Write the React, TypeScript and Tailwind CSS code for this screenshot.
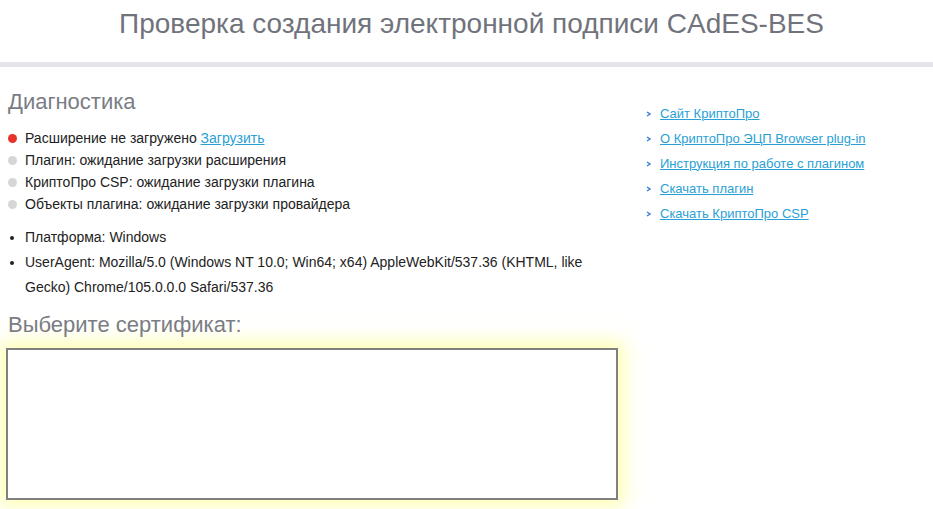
import React from "react";

const statuses = [
  { color: "bg-[#e8322c]", text: "Расширение не загружено", link: "Загрузить" },
  { color: "bg-[#d6d6d6]", text: "Плагин: ожидание загрузки расширения" },
  { color: "bg-[#d6d6d6]", text: "КриптоПро CSP: ожидание загрузки плагина" },
  { color: "bg-[#d6d6d6]", text: "Объекты плагина: ожидание загрузки провайдера" },
];

const links = [
  "Сайт КриптоПро",
  "О КриптоПро ЭЦП Browser plug-in",
  "Инструкция по работе с плагином",
  "Скачать плагин",
  "Скачать КриптоПро CSP",
];

export default function App() {
  return (
    <div className="min-h-[509px] bg-white font-['Liberation_Sans',Arial,sans-serif] text-[#222]">
      <header className="h-[62px] pt-[6px] pl-[10px] text-center">
        <h1 className="text-[28px] leading-[36px] text-[#71737c]">
          Проверка создания электронной подписи CAdES-BES
        </h1>
      </header>
      <div className="h-[5px] bg-[#e4e5ea]" />
      <div className="flex">
        <div className="w-[640px] pl-2">
          <h2 className="mt-[21px] text-[22px] leading-[28px] text-[#7a7c84]">Диагностика</h2>
          <ul className="mt-[11px]">
            {statuses.map((s, i) => (
              <li key={i} className="flex h-[22px] items-center text-[14px]">
                <span className={`mr-[8px] h-[9px] w-[9px] rounded-full ${s.color}`} />
                <span>
                  {s.text}
                  {s.link && (
                    <>
                      {" "}
                      <a href="#" className="text-[#2a9fd6] underline">
                        {s.link}
                      </a>
                    </>
                  )}
                </span>
              </li>
            ))}
          </ul>
          <ul className="mt-[10px] w-[590px] list-disc pl-[17px] text-[14px] leading-[25px]">
            <li>Платформа: Windows</li>
            <li>
              UserAgent: Mozilla/5.0 (Windows NT 10.0; Win64; x64) AppleWebKit/537.36 (KHTML, like Gecko)
              Chrome/105.0.0.0 Safari/537.36
            </li>
          </ul>
          <h2 className="mt-[11px] text-[22px] leading-[28px] text-[#7a7c84]">Выберите сертификат:</h2>
          <div className="-ml-[2px] mt-[9px] h-[152px] w-[612px] border-2 border-[#808080] bg-white shadow-[0_0_18px_6px_rgba(255,255,150,0.75)]" />
        </div>
        <div className="pt-[34px] pl-[6px]">
          <ul>
            {links.map((l) => (
              <li key={l} className="flex h-[25px] items-center text-[13px]">
                <svg width="5" height="6" viewBox="0 0 5 6" className="mr-[9px]">
                  <path d="M1 1 L4 3 L1 5" fill="none" stroke="#3a7fd6" strokeWidth="1.4" />
                </svg>
                <a href="#" className="text-[#2a9fd6] underline">
                  {l}
                </a>
              </li>
            ))}
          </ul>
        </div>
      </div>
    </div>
  );
}
